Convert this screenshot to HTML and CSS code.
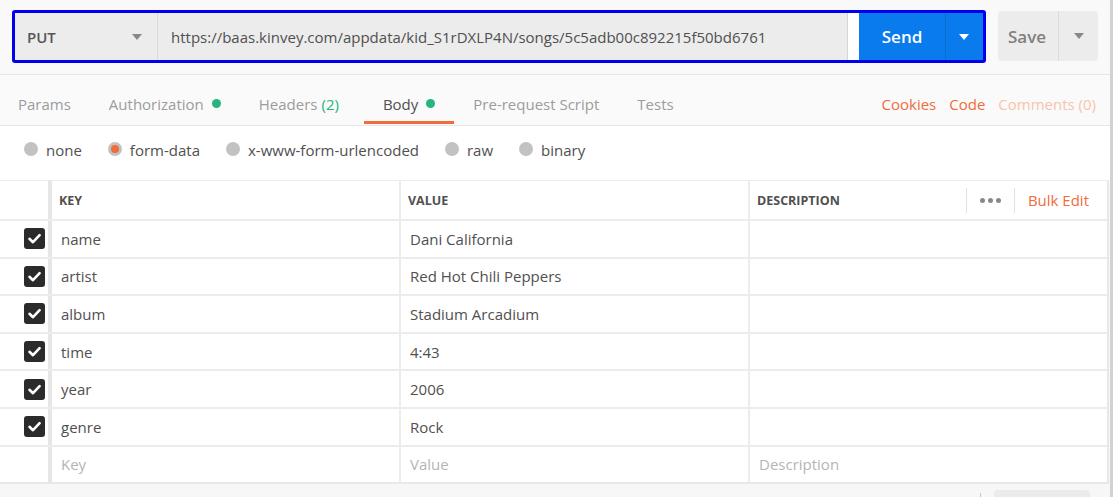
FILE: index.html
```html
<!DOCTYPE html>
<html>
<head>
<meta charset="utf-8">
<link rel="stylesheet" href="styles.css">
</head>
<body>
<div class="page">
  <div class="app">
    <div class="topbar">
      <div class="request">
        <div class="method"><span>PUT</span><span class="caret grey"></span></div>
        <div class="url">https://baas.kinvey.com/appdata/kid_S1rDXLP4N/songs/5c5adb00c892215f50bd6761</div>
        <div class="gap"></div>
        <div class="send">Send</div>
        <div class="send-drop"><span class="caret white"></span></div>
      </div>
      <div class="save">
        <div class="save-label">Save</div>
        <div class="save-drop"><span class="caret grey"></span></div>
      </div>
    </div>

    <div class="tabs">
      <div class="tab">Params</div>
      <div class="tab">Authorization<span class="dot"></span></div>
      <div class="tab headers">Headers <span class="count">(2)</span></div>
      <div class="tab active">Body<span class="dot"></span></div>
      <div class="tab">Pre-request Script</div>
      <div class="tab">Tests</div>
      <div class="tab-links">
        <span class="link">Cookies</span>
        <span class="link">Code</span>
        <span class="link faded">Comments (0)</span>
      </div>
    </div>

    <div class="radios">
      <div class="radio"><span class="circle"></span>none</div>
      <div class="radio"><span class="circle on"></span>form-data</div>
      <div class="radio"><span class="circle"></span>x-www-form-urlencoded</div>
      <div class="radio"><span class="circle"></span>raw</div>
      <div class="radio"><span class="circle"></span>binary</div>
    </div>

    <div class="table">
      <div class="row head">
        <div class="cell check"></div>
        <div class="cell key">KEY</div>
        <div class="cell val">VALUE</div>
        <div class="cell desc">DESCRIPTION
          <div class="head-tools">
            <span class="sep"></span>
            <span class="dots"><i></i><i></i><i></i></span>
            <span class="sep"></span>
            <span class="bulk">Bulk Edit</span>
          </div>
        </div>
      </div>
      <div class="row">
        <div class="cell check"><span class="cb"><svg viewBox="0 0 21 21"><path d="M5.5 10.8 L9 14.2 L15.6 7.2"/></svg></span></div>
        <div class="cell key">name</div>
        <div class="cell val">Dani California</div>
        <div class="cell desc"></div>
      </div>
      <div class="row">
        <div class="cell check"><span class="cb"><svg viewBox="0 0 21 21"><path d="M5.5 10.8 L9 14.2 L15.6 7.2"/></svg></span></div>
        <div class="cell key">artist</div>
        <div class="cell val">Red Hot Chili Peppers</div>
        <div class="cell desc"></div>
      </div>
      <div class="row">
        <div class="cell check"><span class="cb"><svg viewBox="0 0 21 21"><path d="M5.5 10.8 L9 14.2 L15.6 7.2"/></svg></span></div>
        <div class="cell key">album</div>
        <div class="cell val">Stadium Arcadium</div>
        <div class="cell desc"></div>
      </div>
      <div class="row">
        <div class="cell check"><span class="cb"><svg viewBox="0 0 21 21"><path d="M5.5 10.8 L9 14.2 L15.6 7.2"/></svg></span></div>
        <div class="cell key">time</div>
        <div class="cell val">4:43</div>
        <div class="cell desc"></div>
      </div>
      <div class="row">
        <div class="cell check"><span class="cb"><svg viewBox="0 0 21 21"><path d="M5.5 10.8 L9 14.2 L15.6 7.2"/></svg></span></div>
        <div class="cell key">year</div>
        <div class="cell val">2006</div>
        <div class="cell desc"></div>
      </div>
      <div class="row">
        <div class="cell check"><span class="cb"><svg viewBox="0 0 21 21"><path d="M5.5 10.8 L9 14.2 L15.6 7.2"/></svg></span></div>
        <div class="cell key">genre</div>
        <div class="cell val">Rock</div>
        <div class="cell desc"></div>
      </div>
      <div class="row">
        <div class="cell check"></div>
        <div class="cell key ph">Key</div>
        <div class="cell val ph">Value</div>
        <div class="cell desc ph">Description</div>
      </div>
    </div>

    <div class="footer">
      <span class="fline"></span>
      <span class="fbtn"></span>
    </div>
  </div>
  <div class="scroll"></div>
</div>
</body>
</html>
```

FILE: styles.css
```css
* { box-sizing: border-box; }
html, body { margin: 0; padding: 0; }
body {
  font-family: "Open Sans", "Liberation Sans", sans-serif;
  font-size: 15px;
  color: #505050;
  background: #ffffff;
  width: 1114px;
  height: 497px;
  overflow: hidden;
}
.page { display: flex; height: 497px; }
.app { width: 1110px; height: 497px; background: #f8f8f8; display: flex; flex-direction: column; }
.scroll { width: 3px; background: #d2d2d2; height: 497px; }

/* top bar */
.topbar {
  height: 75px;
  padding: 10px 0 0 12px;
  display: flex;
  align-items: flex-start;
  background: #f9f9f9;
  border-bottom: 1px solid #e6e6e6;
}
.request {
  display: flex;
  height: 53px;
  border: 3px solid #0000ee;
  border-radius: 3px;
  background: #fff;
}
.method {
  width: 143px;
  background: #ececec;
  border-right: 1px solid #dadada;
  display: flex;
  align-items: center;
  justify-content: space-between;
  padding: 0 15px 0 12px;
  font-weight: 600;
  font-size: 15px;
  color: #555;
}
.url {
  width: 690px;
  background: #ececec;
  border-right: 1px solid #d6d6d6;
  display: flex;
  align-items: center;
  padding-left: 13px;
  font-size: 15px;
  color: #505050;
  white-space: nowrap;
  overflow: hidden;
}
.gap { width: 11px; background: #fff; }
.send {
  width: 87px;
  background: #097bed;
  color: #fff;
  font-weight: 600;
  font-size: 17px;
  display: flex;
  align-items: center;
  justify-content: center;
  border-right: 1px solid #0a6cd0;
}
.send-drop {
  width: 37px;
  background: #097bed;
  display: flex;
  align-items: center;
  justify-content: center;
}
.caret {
  width: 0; height: 0;
  border-left: 5px solid transparent;
  border-right: 5px solid transparent;
  border-top: 6px solid #888;
}
.caret.white { border-top-color: #fff; margin-left: -2px; }
.save {
  margin: 1px 0 0 12px;
  width: 100px;
  height: 50px;
  background: #ececec;
  border-radius: 4px;
  display: flex;
}
.save-label {
  width: 61px;
  border-right: 1px solid #dcdcdc;
  display: flex;
  align-items: center;
  padding-left: 10px;
  font-weight: 600;
  font-size: 17px;
  color: #808080;
}
.save-drop { flex: 1; display: flex; align-items: center; justify-content: center; }

/* tabs */
.tabs {
  height: 51px;
  display: flex;
  background: #fafafa;
  border-bottom: 1px solid #e6e6e6;
}
.tab {
  height: 50px;
  padding: 8px 19px 0;
  display: flex;
  align-items: center;
  color: #9c9c9c;
  font-size: 15px;
  white-space: nowrap;
}
.tab:first-child { padding-left: 18px; }
.tab.headers { padding-right: 25px; }
.tab.active {
  color: #505050;
  box-shadow: inset 0 -4px 0 #fafafa, inset 0 -7px 0 #f26b3a;
  box-shadow: none;
  position: relative;
}
.tab.active::after {
  content: "";
  position: absolute;
  left: 0; right: 0; bottom: 1px;
  height: 3px;
  background: #f26b3a;
}
.dot { width: 9px; height: 9px; border-radius: 50%; background: #26b47f; margin-left: 8px; margin-top: -2px; }
.count { color: #26b47f; margin-left: 4px; }
.tab-links {
  margin-left: auto;
  padding: 8px 14px 0 0;
  display: flex;
  align-items: center;
  gap: 13px;
  font-size: 15px;
}
.link { color: #f26b3a; }
.link.faded { color: #f8c3ae; }

/* radios */
.radios {
  height: 54px;
  background: #fff;
  display: flex;
  align-items: center;
  padding: 0 0 6px 24px;
}
.radio { display: flex; align-items: center; margin-right: 26px; color: #505050; font-size: 15px; }
.circle {
  width: 14px; height: 14px; border-radius: 50%;
  background: #c2c2c2;
  margin-right: 8px;
  margin-top: -2px;
  display: flex; align-items: center; justify-content: center;
}
.circle.on::after { content: ""; width: 8px; height: 8px; border-radius: 50%; background: #f26b3a; }

/* table */
.table {
  width: 1109px;
  background: #fff;
  border-right: 2px solid #e8e8e8;
  border-bottom: 2px solid #e8e8e8;
}
.row {
  display: grid;
  grid-template-columns: 48px 351px 349px 1fr;
  height: 37.6px;
  border-top: 2px solid #ececec;
}
.row.head { height: 39px; border-top: 1px solid #ececec; }
.cell {
  display: flex;
  align-items: center;
  padding-left: 9px;
  color: #505050;
  font-size: 15px;
  white-space: nowrap;
}
.cell.check { padding: 0 3px 0 0; justify-content: flex-end; }
.cell.key { border-left: 4px solid #e6e6e6; }
.cell.val { border-left: 2px solid #ececec; }
.cell.desc { border-left: 2px solid #ececec; }
.row.head .cell { font-weight: 700; font-size: 12.5px; padding-left: 7px; color: #505050; }
.row.head .cell.check { padding: 0; }
.cell.ph { color: #b5b5b5; }

.cb {
  width: 21px; height: 21px; border-radius: 3px; background: #2b2b2b;
  display: flex;
}
.cb svg { width: 21px; height: 21px; }
.cb path { fill: none; stroke: #fff; stroke-width: 2.6; stroke-linecap: round; stroke-linejoin: round; }

.head-tools {
  margin-left: auto;
  display: flex;
  align-items: center;
  height: 100%;
  padding-right: 18px;
}
.sep { width: 1px; height: 25px; background: #e2e2e2; }
.dots { display: flex; gap: 3px; margin: 0 13px; }
.dots i { width: 5px; height: 5px; border-radius: 50%; background: #888; display: block; }
.row.head .bulk { color: #f26b3a; font-weight: 400; font-size: 15px; margin-left: 13px; }

.footer { flex: 1; position: relative; background: #f7f7f7; }
.fline { position: absolute; left: 980px; top: 9px; width: 1px; height: 10px; background: #c8c8c8; }
.fbtn { position: absolute; left: 994px; top: 6px; width: 96px; height: 20px; border-radius: 4px; background: #ebebeb; }
```
